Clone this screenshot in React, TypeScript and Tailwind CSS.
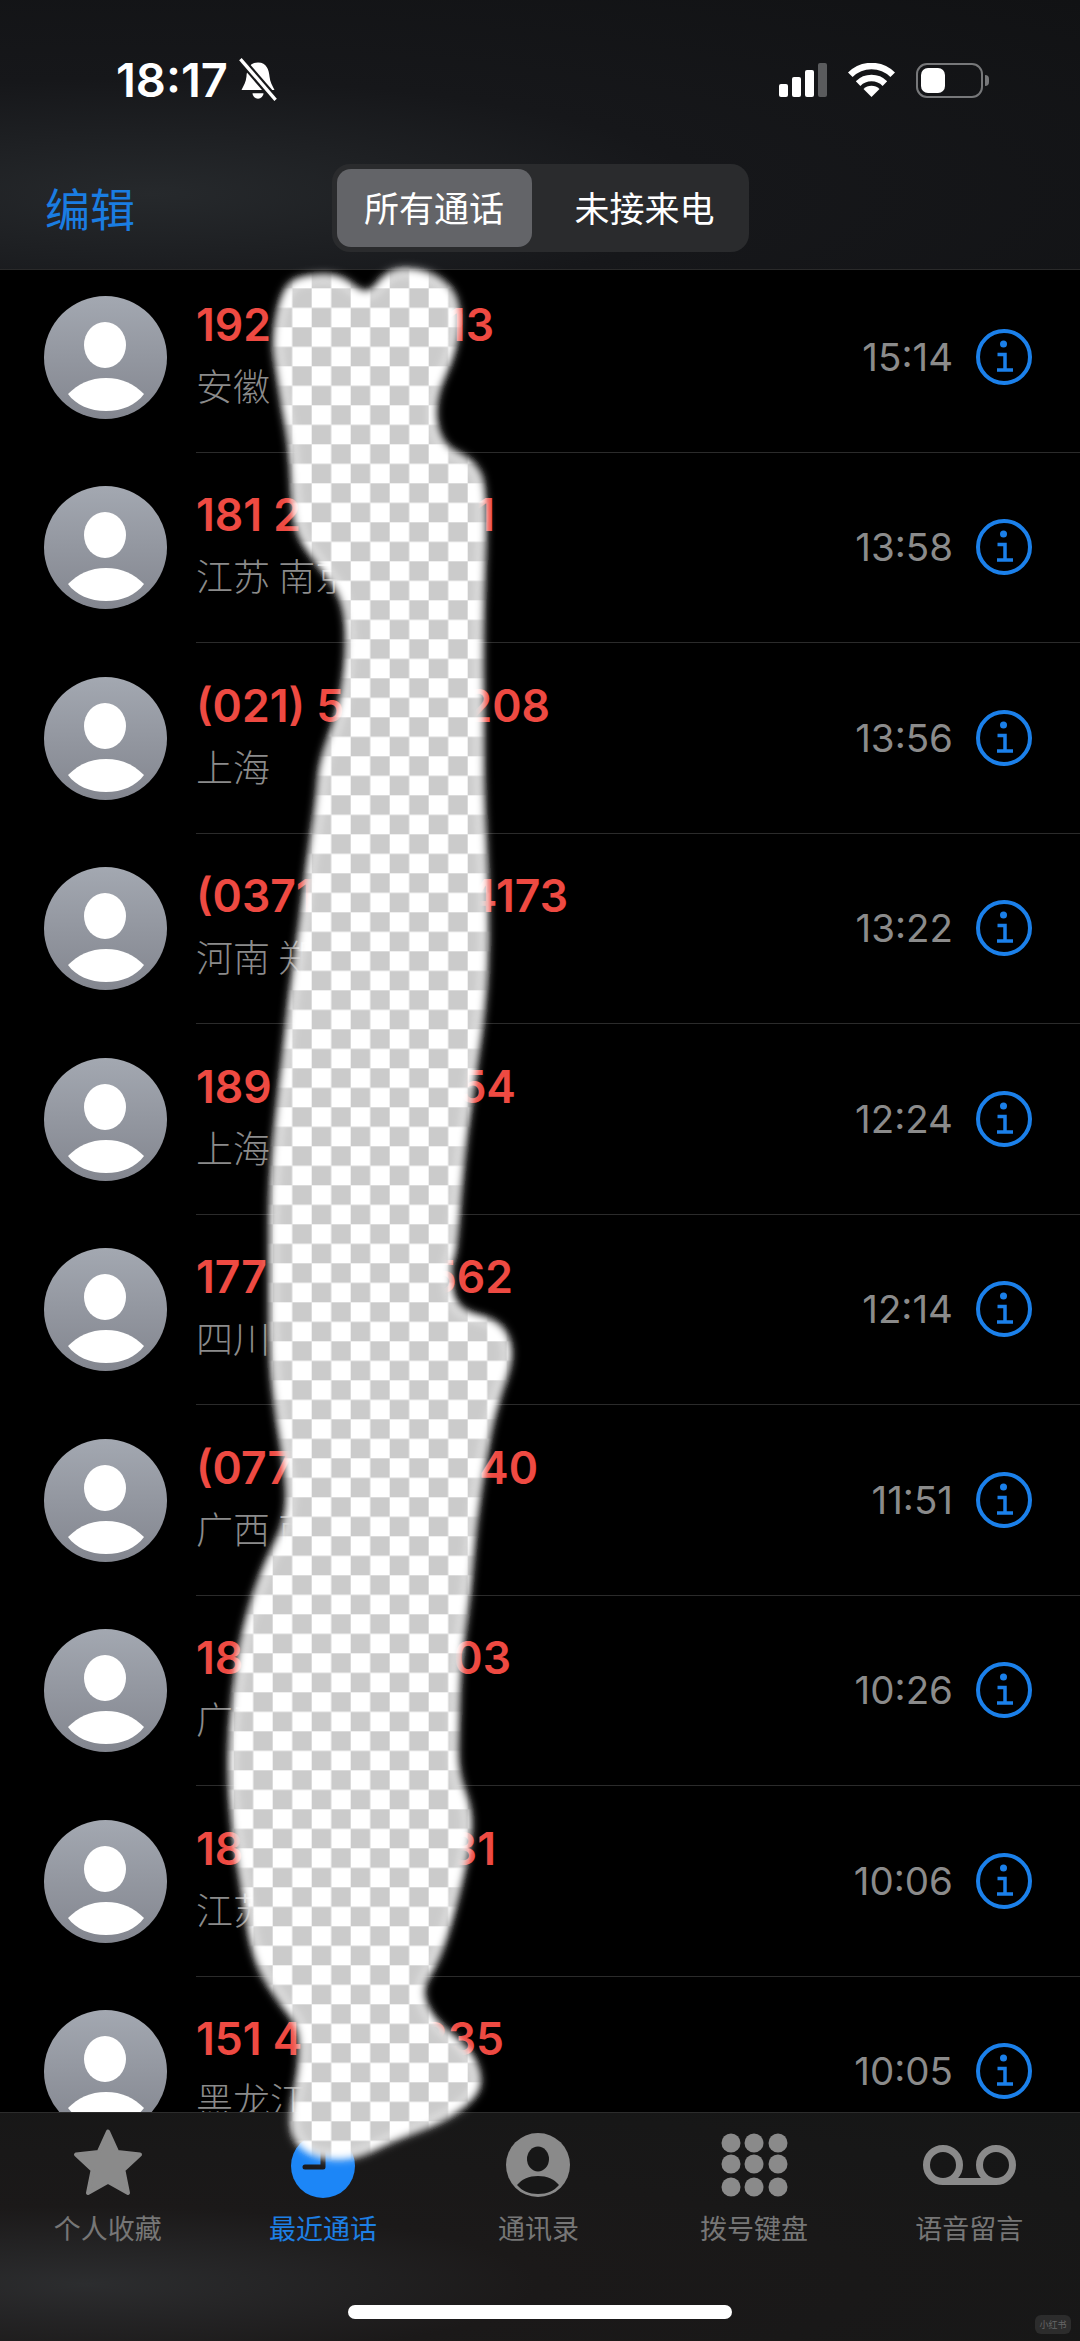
import React from 'react';

const cjk = "font-['Noto_Sans_CJK_SC','Noto_Sans',sans-serif]";
const latin = "font-['Inter','Noto_Sans_CJK_SC',sans-serif]";

interface Call {
  head: string;
  tail: string;
  nameWidth: number;
  place: string;
  time: string;
}

// The middle of each number sits under the erased patch, so only the visible ends are kept
const calls: Call[] = [
  { head: '192', tail: '13', nameWidth: 298, place: '安徽', time: '15:14' },
  { head: '181 2', tail: '1', nameWidth: 299, place: '江苏 南京', time: '13:58' },
  { head: '(021) 5', tail: '208', nameWidth: 354, place: '上海', time: '13:56' },
  { head: '(0371', tail: '4173', nameWidth: 372, place: '河南 郑', time: '13:22' },
  { head: '189', tail: '54', nameWidth: 320, place: '上海', time: '12:24' },
  { head: '177', tail: '562', nameWidth: 317, place: '四川', time: '12:14' },
  { head: '(077', tail: '40', nameWidth: 342, place: '广西 南', time: '11:51' },
  { head: '18', tail: '03', nameWidth: 315, place: '广东', time: '10:26' },
  { head: '18', tail: '31', nameWidth: 300, place: '江苏', time: '10:06' },
  { head: '151 4', tail: '335', nameWidth: 308, place: '黑龙江', time: '10:05' },
];

const tabs = [
  { label: '个人收藏', icon: <StarIcon /> },
  { label: '最近通话', icon: <ClockIcon />, active: true },
  { label: '通讯录', icon: <ContactIcon /> },
  { label: '拨号键盘', icon: <KeypadIcon /> },
  { label: '语音留言', icon: <VoicemailIcon /> },
];

const patchOutline: [number, number][] = [
  [288, 283], [278, 307], [273, 343], [277, 370], [283, 410], [290, 447], [292, 487], [295, 533],
  [320, 567], [343, 597], [348, 643], [340, 710], [320, 760], [317, 800], [308, 860], [300, 927],
  [290, 993], [283, 1060], [275, 1127], [270, 1193], [270, 1260], [270, 1360], [277, 1420], [287, 1477],
  [287, 1520], [263, 1567], [243, 1627], [233, 1693], [228, 1760], [232, 1827], [243, 1893], [253, 1960],
  [280, 2003], [300, 2027], [300, 2067], [290, 2113], [293, 2140], [313, 2157], [353, 2160], [393, 2140],
  [447, 2120], [480, 2093], [480, 2070], [467, 2047], [433, 2020], [420, 1990], [437, 1963], [450, 1927],
  [467, 1860], [473, 1813], [457, 1773], [458, 1727], [460, 1660], [470, 1593], [475, 1527], [487, 1447],
  [497, 1403], [515, 1353], [500, 1320], [453, 1310], [450, 1260], [455, 1260], [463, 1160], [472, 1093],
  [487, 993], [488, 893], [483, 793], [483, 727], [482, 627], [487, 487], [473, 460], [440, 445],
  [433, 400], [457, 350], [460, 300], [440, 277], [413, 268], [387, 271], [367, 298], [340, 274], [305, 276],
];

// Rounds the outline by running quadratic curves through the midpoints
function smoothPath(points: [number, number][]) {
  const mid = (a: [number, number], b: [number, number]) => `${(a[0] + b[0]) / 2} ${(a[1] + b[1]) / 2}`;
  let d = `M${mid(points[points.length - 1], points[0])}`;
  points.forEach((p, i) => {
    d += ` Q${p[0]} ${p[1]} ${mid(p, points[(i + 1) % points.length])}`;
  });
  return d + ' Z';
}

const patchPath = smoothPath(patchOutline);

function ErasedPatch() {
  return (
    <svg className="absolute left-0 top-0 z-20 pointer-events-none" width="1080" height="2341" viewBox="0 0 1080 2341">
      <defs>
        <pattern id="checker" x="311.7" y="288.3" width="39" height="39" patternUnits="userSpaceOnUse">
          <rect width="39" height="39" fill="#ffffff" />
          <rect x="19.5" width="19.5" height="19.5" fill="#cbcbcb" />
          <rect y="19.5" width="19.5" height="19.5" fill="#cbcbcb" />
        </pattern>
        <filter id="soft" x="-10%" y="-10%" width="120%" height="120%">
          <feGaussianBlur stdDeviation="5" />
        </filter>
        <mask id="inner" maskUnits="userSpaceOnUse" x="0" y="0" width="1080" height="2341">
          <path d={patchPath} fill="#fff" stroke="#000" strokeWidth="14" filter="url(#soft)" />
        </mask>
      </defs>
      <path d={patchPath} fill="#fff" filter="url(#soft)" />
      <rect width="1080" height="2341" fill="url(#checker)" mask="url(#inner)" />
    </svg>
  );
}

function BellSlash() {
  return (
    <svg width="42" height="44" viewBox="0 0 38 40">
      <path d="M19 4C11 4 9 11 8.500 17C8 22 6 25 4 29H34C32 25 30 22 29.500 17C29 11 27 4 19 4Z" fill="#fff" />
      <path d="M14 32H24A5 5 0 0 1 14 32Z" fill="#fff" />
      <path d="M3 1L35 38" stroke="#17181a" strokeWidth="7" />
      <path d="M3 1L35 38" stroke="#fff" strokeWidth="3" />
    </svg>
  );
}

function SignalBars() {
  return (
    <div className="flex items-end gap-[4px] h-[34px]">
      <div className="w-[9px] h-[13px] rounded-[2px] bg-white" />
      <div className="w-[9px] h-[20px] rounded-[2px] bg-white" />
      <div className="w-[9px] h-[27px] rounded-[2px] bg-white" />
      <div className="w-[9px] h-[34px] rounded-[2px] bg-[#5a5b5d]" />
    </div>
  );
}

function WifiIcon() {
  return (
    <svg width="47" height="34" viewBox="0 0 47 34" fill="none">
      <path d="M2.300 11.800A30 30 0 0 1 44.700 11.800" stroke="#fff" strokeWidth="6.500" />
      <path d="M10.100 20.600A19 19 0 0 1 36.900 20.600" stroke="#fff" strokeWidth="6.500" />
      <path d="M23.500 34L15.500 26A11.300 11.300 0 0 1 31.500 26Z" fill="#fff" />
    </svg>
  );
}

function Battery() {
  return (
    <div className="flex items-center gap-[2px]">
      <div className="w-[67px] h-[35px] rounded-[11px] border-[2px] border-[#77787a] p-[3px]">
        <div className="w-[24px] h-full rounded-[7px] bg-white" />
      </div>
      <div className="w-[4px] h-[11px] rounded-r-full bg-[#77787a]" />
    </div>
  );
}

function Avatar() {
  return (
    <div className="w-[123px] h-[123px] shrink-0 rounded-full bg-linear-to-b from-[#a3a8b1] to-[#83868f]">
      <svg width="123" height="123" viewBox="0 0 123 123">
        <ellipse cx="61" cy="49" rx="21" ry="23" fill="#fff" />
        <path d="M24 98C34 88 46 82 62 82C78 82 90 88 100 98C92 109 78 115 62 115C46 115 32 109 24 98Z" fill="#fff" />
      </svg>
    </div>
  );
}

function InfoIcon() {
  return (
    <svg width="56" height="56" viewBox="0 0 56 56" fill="none" className="shrink-0">
      <circle cx="28" cy="28" r="26" stroke="#1b80ea" strokeWidth="4" />
      <circle cx="27.500" cy="15" r="3.500" fill="#1b80ea" />
      <path d="M21.500 25.500H29V41M21 41H37" stroke="#1b80ea" strokeWidth="3.500" />
    </svg>
  );
}

function StarIcon() {
  return (
    <svg width="72" height="72" viewBox="0 0 72 72">
      <path
        d="M36 3.500L45.300 24L68 26.500L51.400 42.100L56 65L36 53.700L16 65L20.600 42.100L4 26.500L26.700 24Z"
        fill="#8a8a8a"
        stroke="#8a8a8a"
        strokeWidth="4"
        strokeLinejoin="round"
      />
    </svg>
  );
}

function ClockIcon() {
  return (
    <svg width="72" height="72" viewBox="0 0 72 72" fill="none">
      <circle cx="36" cy="38" r="32" fill="#1c86f7" />
      <path d="M36 16V39H18" stroke="#1b1b1d" strokeWidth="5" strokeLinecap="round" strokeLinejoin="round" />
    </svg>
  );
}

function ContactIcon() {
  return (
    <svg width="72" height="72" viewBox="0 0 72 72">
      <circle cx="36" cy="37" r="32" fill="#8a8a8a" />
      <ellipse cx="36" cy="31" rx="11" ry="12.500" fill="#171717" />
      <path d="M15 57C20 51 27 48 36 48C45 48 52 51 57 57C52 63 45 66 36 66C27 66 20 63 15 57Z" fill="#171717" />
    </svg>
  );
}

function KeypadIcon() {
  const cols = [27, 50, 74];
  const rows = [15, 36, 59];
  return (
    <svg width="100" height="72" viewBox="0 0 100 72">
      {rows.map(y => cols.map(x => <circle key={`${x}-${y}`} cx={x} cy={y} r="9.500" fill="#8a8a8a" />))}
    </svg>
  );
}

function VoicemailIcon() {
  return (
    <svg width="100" height="72" viewBox="0 0 100 72" fill="none">
      <circle cx="24" cy="37" r="16.500" stroke="#8a8a8a" strokeWidth="7" />
      <circle cx="77" cy="37" r="16.500" stroke="#8a8a8a" strokeWidth="7" />
      <path d="M24 53.500H77" stroke="#8a8a8a" strokeWidth="7" />
    </svg>
  );
}

const CallRow: React.FC<{ call: Call }> = ({ call }) => (
  <div className="flex items-center h-[190.5px] shrink-0 pl-[44px]">
    <Avatar />
    <div className="flex items-center flex-1 h-full ml-[29px] pr-[48px] border-b border-[#2b2b2b]">
      <div className="flex-1 flex flex-col gap-[10px] mb-[4px]">
        <div
          className={`flex justify-between h-[50px] leading-[50px] text-[44.500px] font-semibold text-[#ee4a42] ${latin}`}
          style={{ width: call.nameWidth }}
        >
          <span>{call.head}</span>
          <span>{call.tail}</span>
        </div>
        <div className={`h-[50px] leading-[50px] text-[37px] font-light text-[#8b8b8b] ${cjk}`}>{call.place}</div>
      </div>
      <span className={`mr-[23px] mt-[2px] text-[38.500px] text-[#8b8b8b] ${latin}`}>{call.time}</span>
      <InfoIcon />
    </div>
  </div>
);

const App: React.FC = () => {
  return (
    <div className="relative flex flex-col w-[1080px] h-[2341px] overflow-hidden bg-black">
      <header className="relative z-10 h-[270px] shrink-0 border-b border-[#2a2a2a] bg-[radial-gradient(ellipse_at_14%_72%,#26292c_0%,#16171a_42%,#111214_100%)]">
        <div className="flex items-center justify-between h-[40px] mt-[60px] pl-[116px] pr-[91px]">
          <div className="flex items-center gap-[9px]">
            <span className={`text-[47px] leading-[40px] font-semibold text-white ${latin}`}>18:17</span>
            <BellSlash />
          </div>
          <div className="flex items-center gap-[21px]">
            <SignalBars />
            <WifiIcon />
            <Battery />
          </div>
        </div>
        <div className="grid grid-cols-[1fr_auto_1fr] items-center mt-[64px] px-[45px]">
          <span className={`text-[45px] leading-[86px] text-[#1a7de2] ${cjk}`}>编辑</span>
          <div className={`flex w-[417px] h-[88px] p-[5px] rounded-[18px] bg-[#2a2b2d] text-[35px] text-white ${cjk}`}>
            <div className="flex items-center justify-center w-[195px] pb-[2px] rounded-[14px] bg-[#636468]">所有通话</div>
            <div className="flex items-center justify-center flex-1 pb-[2px] pl-[14px]">未接来电</div>
          </div>
        </div>
      </header>

      <main className="flex flex-col flex-1 min-h-0 -mt-[8px] overflow-hidden">
        {calls.map(call => (
          <CallRow key={call.time} call={call} />
        ))}
      </main>

      <nav className="relative z-10 h-[229px] shrink-0 pt-[15px] pr-[3px] border-t border-[#2c2c2c] bg-[radial-gradient(ellipse_at_8%_75%,#2c2d2f_0%,#1b1919_32%,#151616_100%)]">
        <div className="grid grid-cols-5">
          {tabs.map(tab => (
            <div key={tab.label} className="flex flex-col items-center">
              <div className="flex justify-center h-[72px]">{tab.icon}</div>
              <span
                className={`mt-[10px] text-[27px] leading-[36px] ${cjk} ${tab.active ? 'text-[#1d7fe4]' : 'text-[#767676]'}`}
              >
                {tab.label}
              </span>
            </div>
          ))}
        </div>
        <div className="absolute left-[348px] top-[192px] w-[384px] h-[14px] rounded-full bg-white" />
        <div className={`absolute left-[1035px] top-[202px] w-[36px] h-[19px] rounded-[6px] bg-[#2c2c2c] text-center text-[9px] leading-[19px] text-[#666] ${cjk}`}>
          小红书
        </div>
      </nav>

      <ErasedPatch />
    </div>
  );
};

export default App;
